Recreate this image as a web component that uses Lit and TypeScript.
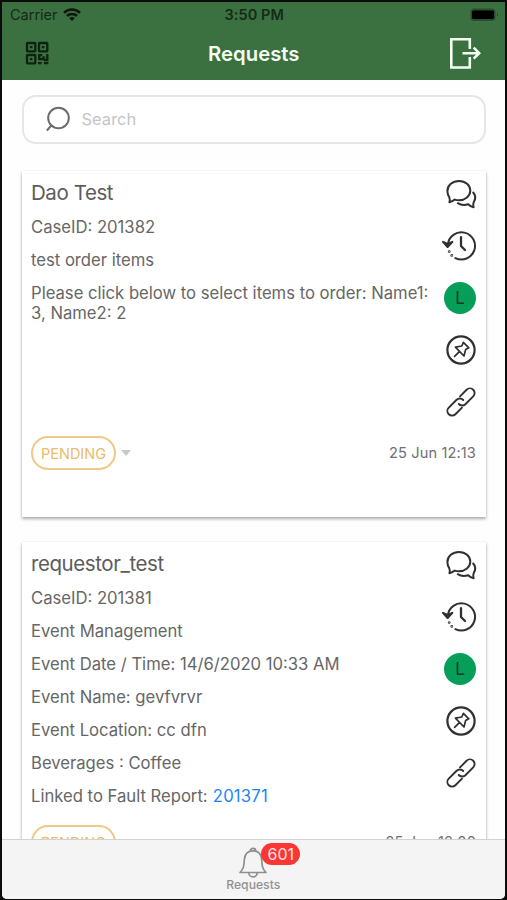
import { LitElement, html, css, svg } from "lit";
import { customElement, property } from "lit/decorators.js";

const icons = {
  chat: svg`<path d="M4.4 24.2C5 22.3 4.9 20.8 4.2 19C2.8 17 2.4 15 2.4 13C2.4 7.2 7.6 3 14 3C20.4 3 25.3 7.2 25.3 12.6C25.3 18 20.2 22.2 14 22.2C12.4 22.2 11 22 9.8 21.6C8.5 22.8 6.8 23.8 4.4 24.2Z"/><path d="M12.8 25.2C15.2 26.8 19.6 27.4 23.2 26.3C24.6 27.7 26.2 28.8 28.6 29.3C28 27.4 27.9 25.8 28.7 24.2C30.8 20.7 30.5 17 28.2 14.5"/>`,
  history: svg`<path d="M2.9 14.6A13.6 13.6 0 1 1 10.4 28.1"/><path class="solid" d="M-2 11.8L2.6 14L7.4 11.8L2.6 17Z"/><path d="M16 7.2V16L20 20" stroke-width="2.3"/><circle class="solid" cx="4.2" cy="21.6" r=".4"/><circle class="solid" cx="6.8" cy="25.4" r=".4"/>`,
  pin: svg`<circle cx="16" cy="16" r="13.6" stroke-width="2.2"/><path stroke-width="1.7" d="M18.4 8.4L23.8 13.8L20.6 15.6L19 22L10.4 13.2L16.8 12ZM14.6 17.4L9.6 22.4"/>`,
  link: svg`<g transform="translate(16 16) scale(.94) rotate(-45) translate(-16 -16)"><path d="M19.5 11H29.4a5 5 0 0 1 0 10H17.6a5 5 0 0 1-4.8-5.2"/><path d="M12.5 21H2.6a5 5 0 0 1 0-10H14.4a5 5 0 0 1 4.8 5.2"/></g>`,
};

interface RequestCase {
  requester: string;
  lines: string[];
  linked?: string;
  date: string;
}

const cases: RequestCase[] = [
  {
    requester: "Dao Test",
    lines: [
      "CaseID: 201382",
      "test order items",
      "Please click below to select items to order: Name1: 3, Name2: 2",
    ],
    date: "25 Jun 12:13",
  },
  {
    requester: "requestor_test",
    lines: [
      "CaseID: 201381",
      "Event Management",
      "Event Date / Time: 14/6/2020 10:33 AM",
      "Event Name: gevfvrvr",
      "Event Location: cc dfn",
      "Beverages : Coffee",
    ],
    linked: "201371",
    date: "25 Jun 12:00",
  },
];

@customElement("request-card")
export class RequestCard extends LitElement {
  @property({ attribute: false }) data!: RequestCase;

  static styles = css`
    :host {
      display: block;
      flex: none;
      background: #fff;
      color: #666;
      padding: 0 9.5px 47px;
      box-shadow: 0 2px 3px rgba(0, 0, 0, 0.32), 0 0 2px rgba(0, 0, 0, 0.08);
    }
    .body {
      display: flex;
      min-height: 259px;
    }
    .text {
      flex: 1;
      min-width: 0;
      padding: 9px 10px 0 0;
    }
    h2 {
      margin: 0 0 11.8px;
      font-size: 20.5px;
      line-height: 25px;
      font-weight: 400;
      letter-spacing: -0.42px;
      color: #5c5c5c;
    }
    p {
      margin: 0 0 12.5px;
      font-size: 16.65px;
      line-height: 20.5px;
    }
    a {
      margin-left: 0.5px;
      color: #1b86f5;
      letter-spacing: 0.2px;
    }
    .actions {
      display: flex;
      flex-direction: column;
      gap: 20px;
      padding: 7px 0 0;
      margin-right: -1px;
    }
    svg {
      display: block;
      width: 32px;
      height: 32px;
      overflow: visible;
      fill: none;
      stroke: #303030;
      stroke-width: 2;
      stroke-linecap: round;
      stroke-linejoin: round;
    }
    .solid {
      fill: #303030;
    }
    .avatar {
      width: 32px;
      height: 32px;
      margin-left: -1px;
      border-radius: 50%;
      background: #079e59;
      color: #16382a;
      font-size: 17px;
      line-height: 33px;
      text-align: center;
    }
    .foot {
      display: flex;
      align-items: center;
      margin-top: 6px;
    }
    .status {
      box-sizing: border-box;
      width: 85px;
      height: 34px;
      border: 2px solid #efc988;
      border-radius: 17px;
      color: #ebbb6a;
      font-size: 14.5px;
      line-height: 31px;
      text-align: center;
    }
    .caret {
      margin-left: 5px;
      border: 5px solid transparent;
      border-top: 6px solid #c8c8c8;
      border-bottom: 0;
    }
    .date {
      margin-left: auto;
      font-size: 14.6px;
      letter-spacing: 0.12px;
      color: #707070;
    }
  `;

  render() {
    const d = this.data;
    const icon = (g: unknown) => html`<svg viewBox="0 0 32 32">${g}</svg>`;
    return html`
      <div class="body">
        <div class="text">
          <h2>${d.requester}</h2>
          ${d.lines.map((l) => html`<p>${l}</p>`)}
          ${d.linked ? html`<p>Linked to Fault Report: <a>${d.linked}</a></p>` : ""}
        </div>
        <div class="actions">
          ${icon(icons.chat)} ${icon(icons.history)}
          <div class="avatar">L</div>
          ${icon(icons.pin)} ${icon(icons.link)}
        </div>
      </div>
      <div class="foot">
        <div class="status">PENDING</div>
        <div class="caret"></div>
        <div class="date">${d.date}</div>
      </div>
    `;
  }
}

@customElement("app-root")
export class AppRoot extends LitElement {
  static styles = css`
    :host {
      display: block;
      box-sizing: border-box;
      height: 900px;
      padding: 2px 2.5px 1.5px 2px;
      background: #0c0c0c;
      font-family: Inter, "Liberation Sans", sans-serif;
    }
    .screen {
      display: flex;
      flex-direction: column;
      height: 100%;
      overflow: hidden;
      background: #fefefe;
      border-radius: 0 0 5px 5px;
    }
    header {
      flex: none;
      height: 78px;
      background: #3b7040;
    }
    .statusbar {
      display: grid;
      grid-template-columns: 1fr auto 1fr;
      align-items: center;
      height: 25px;
      padding: 0 6px 0 8px;
      font-size: 14.5px;
      color: #152b18;
    }
    .carrier {
      display: flex;
      align-items: center;
      gap: 5px;
    }
    .time {
      font-weight: 600;
      letter-spacing: 0.1px;
    }
    .battery {
      justify-self: end;
    }
    .nav {
      display: grid;
      grid-template-columns: 1fr auto 1fr;
      align-items: center;
      height: 52px;
      padding: 0 24px 0 23px;
    }
    h1 {
      margin: 0 -2px 0 0;
      font-size: 20.3px;
      font-weight: 600;
      color: #f3fff0;
    }
    svg {
      display: block;
    }
    .exit {
      justify-self: end;
    }
    .search {
      display: flex;
      flex: none;
      align-items: center;
      box-sizing: border-box;
      height: 49px;
      margin: 15px 19px 0 19.5px;
      padding: 0 0 1.5px 21px;
      gap: 11px;
      border: 2px solid #e6e6e8;
      border-radius: 14px;
      background: #fff;
      color: #c4c4c6;
      font-size: 16.5px;
    }
    main {
      display: flex;
      flex: 1;
      flex-direction: column;
      gap: 25px;
      min-height: 0;
      overflow: hidden;
      padding: 27px 19px 0 19.5px;
    }
    footer {
      display: flex;
      flex: none;
      flex-direction: column;
      align-items: center;
      box-sizing: border-box;
      height: 59.5px;
      padding-top: 6px;
      border-top: 1px solid #d2d2d2;
      background: #f5f4f5;
      color: #929292;
      font-size: 12.2px;
      font-weight: 500;
      line-height: 14px;
    }
    .bell {
      position: relative;
    }
    .badge {
      position: absolute;
      left: 23px;
      top: -3px;
      width: 39px;
      height: 22px;
      border-radius: 11px;
      background: #fb3634;
      color: #ffe3e1;
      font-size: 16px;
      font-weight: 400;
      line-height: 22px;
      text-align: center;
    }
  `;

  render() {
    return html`
      <div class="screen">
        <header>
          <div class="statusbar">
            <div class="carrier">
              <span>Carrier</span>
              <svg width="18" height="13" viewBox="0 0 18 13" fill="none" stroke="#0c180d" stroke-width="2.5">
                <path d="M1 4.8C5.6 .4 12.4 .4 17 4.8M4 8C6.8 5.2 11.2 5.2 14 8" />
                <path d="M6.2 10.2Q9 7.8 11.8 10.2L9 13Z" fill="#0c180d" stroke="none" />
              </svg>
            </div>
            <div class="time">3:50 PM</div>
            <svg class="battery" width="29" height="14" viewBox="0 0 29 14">
              <rect x=".5" y=".5" width="25" height="12.5" rx="3.5" fill="#285030" />
              <rect x="2" y="2.5" width="22" height="8.5" rx="1.5" fill="#000" />
              <path d="M27 5v4q1.5-2 0-4" fill="#173019" />
            </svg>
          </div>
          <div class="nav">
            <svg width="24" height="24" viewBox="0 0 24 24" fill="none" stroke="#0c2410" stroke-width="2.3">
              <rect x="2" y="2" width="8.3" height="8.3" rx=".5" />
              <rect x="14" y="2" width="8.3" height="8.3" rx=".5" />
              <rect x="2" y="14" width="8.3" height="8.3" rx=".5" />
              <path d="M4.8 6.1h2.6M16.8 6.1h2.6M4.8 18.1h2.6M13 14.2h4.2M14.2 13v5.2h4.4v-3M22.3 13v6h-3.5M13 22.2h3.6M19 22.2h4.4" />
            </svg>
            <h1>Requests</h1>
            <svg class="exit" width="32" height="32" viewBox="0 0 32 32" fill="none" stroke="#f5fff2" stroke-width="2.6">
              <path d="M20.8 12V2.3H2.3V30.5H20.8V20M13.5 16.2H30M24.7 10.7L30.2 16.2L24.7 21.7" />
            </svg>
          </div>
        </header>
        <div class="search">
          <svg width="26" height="26" viewBox="0 0 26 26" fill="none" stroke="#6c6c6c" stroke-width="2" stroke-linecap="round">
            <circle cx="13.5" cy="12" r="10.3" />
            <path d="M6.3 19.4L2.4 24" />
          </svg>
          <span>Search</span>
        </div>
        <main>${cases.map((c) => html`<request-card .data=${c}></request-card>`)}</main>
        <footer>
          <div class="bell">
            <svg width="30" height="32" viewBox="0 0 30 32" fill="none" stroke="#8e8e8e" stroke-width="1.7" stroke-linejoin="round">
              <path d="M2 26.5C5.5 23 6 20 6.3 14C6.6 8.5 9.5 4.8 15 4.8S23.4 8.5 23.7 14C24 20 24.5 23 28 26.5Z" />
              <path d="M12.3 5a2.7 2.7 0 1 1 5.4 0M10.8 26.7a4.2 4.2 0 0 0 8.4 0" />
            </svg>
            <div class="badge">601</div>
          </div>
          <div>Requests</div>
        </footer>
      </div>
    `;
  }
}
